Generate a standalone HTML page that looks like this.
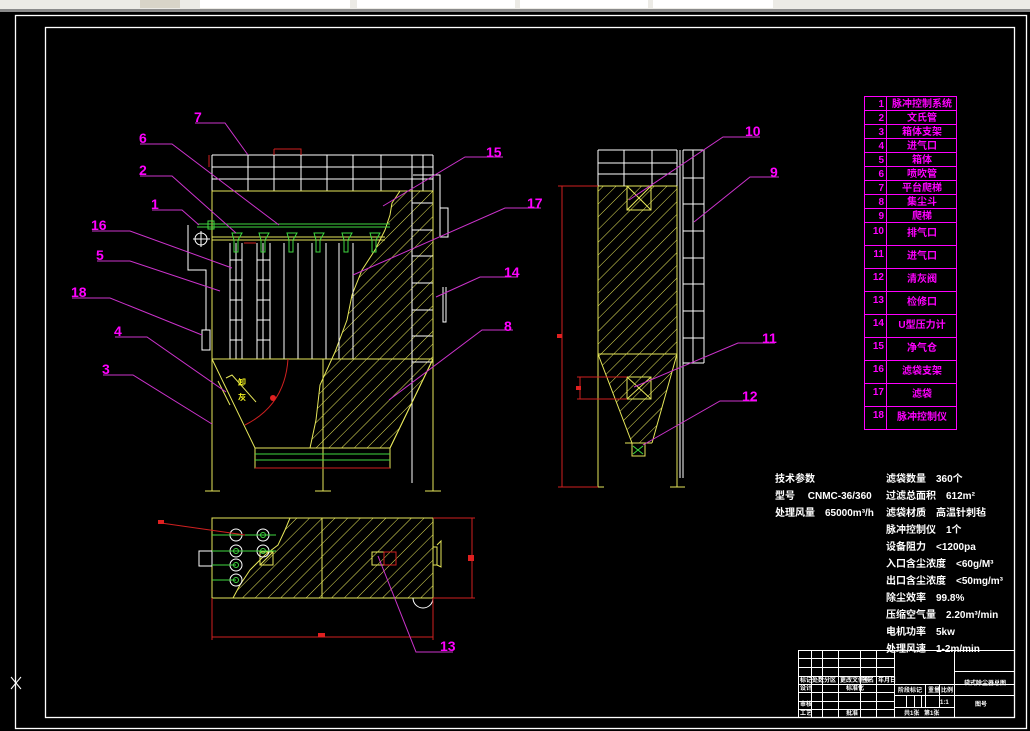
<!DOCTYPE html>
<html><head><meta charset="utf-8"><style>
html,body{margin:0;padding:0;background:#000;width:1030px;height:731px;overflow:hidden}
svg{display:block}
text{font-family:"Liberation Sans","Noto Sans CJK SC",sans-serif;font-weight:bold}
.m{fill:#ff00ff;font-size:14px}
.t{fill:#ff00ff;font-size:10px}
.p{fill:#fff;font-size:10px}
.s{fill:#fff;font-size:6px}
</style></head><body>
<svg width="1030" height="731" viewBox="0 0 1030 731" xmlns="http://www.w3.org/2000/svg">
<defs>
<pattern id="h" patternUnits="userSpaceOnUse" width="9" height="9" patternTransform="rotate(45)">
<line x1="0" y1="0" x2="0" y2="9" stroke="#e6e65a" stroke-width="1"/>
</pattern>
</defs>
<rect width="1030" height="731" fill="#000"/>
<!-- toolbar -->
<rect x="0" y="0" width="1030" height="10" fill="#ecebe6"/>
<rect x="0" y="9" width="1030" height="3" fill="#8a8a8a"/>
<rect x="200" y="0" width="150" height="8" fill="#fff"/>
<rect x="357" y="0" width="158" height="8" fill="#fff"/>
<rect x="520" y="0" width="128" height="8" fill="#fff"/>
<rect x="653" y="0" width="120" height="8" fill="#fff"/>
<rect x="140" y="0" width="40" height="8" fill="#d8d4c8"/>
<!-- frames -->
<g fill="none" stroke="#fff" stroke-width="1.3">
<rect x="15.5" y="15.5" width="1011" height="713"/>
<rect x="45.5" y="27.5" width="969" height="690"/>
</g>
<path d="M11 677 L21 689 M21 677 L11 689" stroke="#fff" stroke-width="1"/>

<!-- ===== FRONT VIEW ===== -->
<path d="M392 203 L400 191 L433 191 L433 359 L390 448 L310 448 L316 420 L320 385 L335 352 L347 320 L352 295 L362 270 L375 250 L385 230 L390 215 Z" fill="url(#h)" stroke="#e6e65a" stroke-width="1"/>
<g stroke="#fff" stroke-width="1" fill="none">
<path d="M212 155 H433 M212 167 H433 M212 179 H433"/>
<path d="M212 155 V191 M248 155 V191 M274 155 V191 M301 155 V191 M327 155 V191 M353 155 V191 M381 155 V191 M412 155 V191 M423 155 V191 M433 155 V191"/>
<path d="M412 175 V483 M413 175 H440 V237 M440 208 H448 V237 H440"/>
<path d="M412 203 H433 M412 230 H433 M412 256 H433 M412 283 H433 M412 310 H433 M412 336 H433 M412 362 H433"/>
<path d="M443 287 V322 H446 V287"/>
<path d="M188 225 V270 H206 V330 M202 330 H210 V350 H202 Z"/>
<circle cx="201" cy="239" r="6"/>
<path d="M193 239 H210 M201 231 V247"/>
<!-- bags -->
<path d="M230 243 V359 M236 243 V359 M242 243 V359 M230 260 H242 M230 280 H242 M230 300 H242 M230 320 H242 M230 340 H242"/>
<path d="M257 243 V359 M263 243 V359 M270 243 V359 M257 260 H270 M257 280 H270 M257 300 H270 M257 320 H270 M257 340 H270"/>
<path d="M284 243 V359 M298 243 V359 M312 243 V359 M326 243 V359 M339 243 V359 M353 243 V359"/>
</g>
<g stroke="#e6e65a" stroke-width="1" fill="none">
<rect x="212" y="191" width="221" height="168"/>
<path d="M212 359 V491 M323 359 V491 M433 359 V491 M205 491 H220 M315 491 H331 M425 491 H441"/>
<path d="M212 359 L255 448 M433 359 L390 448"/>
<rect x="255" y="448" width="135" height="20"/>
<path d="M212 237 H385 M212 240 H385"/>
<path d="M226 378 L232 375 L256 402 M218 381 L230 405"/>
</g>
<path d="M255 454 H390 M255 460 H390" stroke="#3fd83f"/>
<path d="M255 468 H390" stroke="#d02020"/>
<path d="M197 224 H390 M197 227 H390" stroke="#3fd83f" stroke-width="1"/>
<g stroke="#3fd83f" fill="none">
<path d="M232 233 H242 L238 240 V252 H234 V240 Z M259 233 H269 L265 240 V252 H261 V240 Z M287 233 H297 L293 240 V252 H289 V240 Z M314 233 H324 L320 240 V252 H316 V240 Z M342 233 H352 L348 240 V252 H344 V240 Z M370 233 H380 L376 240 V252 H372 V240 Z"/>
<rect x="208" y="221" width="6" height="8"/>
</g>
<path d="M288 359 Q285 405 245 425" stroke="#d02020" fill="none"/>
<circle cx="273" cy="398" r="3" fill="#e02020"/>
<path d="M209 155 V167 M274 149 H301 V155 M274 149 V155 M244 243 H256" stroke="#d02020" fill="none"/>
<text x="238" y="385" fill="#f0f020" style="font-size:8px">卸</text>
<text x="238" y="400" fill="#f0f020" style="font-size:8px">灰</text>

<!-- leaders front -->
<g stroke="#cc33cc" stroke-width="1" fill="none">
<path d="M195 123 H225 L248 155"/>
<path d="M140 144 H172 L279 225"/>
<path d="M140 176 H172 L236 233"/>
<path d="M152 210 H182 L199 225"/>
<path d="M92 231 H130 L232 268"/>
<path d="M97 261 H130 L220 291"/>
<path d="M72 298 H110 L202 335"/>
<path d="M115 337 H147 L226 392"/>
<path d="M103 375 H133 L212 424"/>
<path d="M503 157 H465 L383 206"/>
<path d="M541 208 H505 L353 275"/>
<path d="M518 277 H480 L436 297"/>
<path d="M513 330 H482 L389 400"/>
</g>
<g class="m">
<text x="194" y="122">7</text><text x="139" y="143">6</text><text x="139" y="175">2</text>
<text x="151" y="209">1</text><text x="91" y="230">16</text><text x="96" y="260">5</text>
<text x="71" y="297">18</text><text x="114" y="336">4</text><text x="102" y="374">3</text>
<text x="486" y="157">15</text><text x="527" y="208">17</text><text x="504" y="277">14</text>
<text x="504" y="331">8</text>
</g>

<!-- ===== SIDE VIEW ===== -->
<path d="M598 186 H677 V354 L652 443 H632 L598 354 Z" fill="url(#h)"/>
<g stroke="#e6e65a" fill="none">
<path d="M598 186 H677 V487 M598 186 V487 M598 354 H677 M598 354 L632 443 M677 354 L652 443 M592 487 H604 M670 487 H685"/>
<rect x="627" y="186" width="24" height="24"/><path d="M627 186 L651 210 M651 186 L627 210"/>
<rect x="627" y="377" width="24" height="22"/><path d="M627 377 L651 399 M651 377 L627 399"/>
<path d="M625 443 H652 M632 443 V456 H645 V443"/>
</g>
<path d="M633 446 L643 454 M643 446 L633 454" stroke="#3fd83f"/>
<g stroke="#fff" fill="none">
<path d="M598 150 H677 M598 163 H677 M598 174 H677 M598 150 V186 M624 150 V186 M652 150 V186 M677 150 V186"/>
<path d="M683 150 V478 M680 150 V478 M704 150 V363 M693 150 V363"/>
<path d="M683 150 H704 M683 178 H704 M683 204 H704 M683 231 H704 M683 258 H704 M683 284 H704 M683 311 H704 M683 338 H704 M683 363 H704"/>
</g>
<g stroke="#d02020" fill="none">
<path d="M562 186 V487 M558 186 H598 M558 487 H598 M580 377 V399 M577 377 H627 M577 399 H627"/>
</g>
<rect x="557" y="334" width="5" height="4" fill="#e02020"/>
<rect x="576" y="386" width="5" height="4" fill="#e02020"/>
<g stroke="#cc33cc" fill="none">
<path d="M760 137 H723 L629 200"/>
<path d="M779 177 H750 L694 222"/>
<path d="M775 343 H738 L634 387"/>
<path d="M757 401 H720 L643 445"/>
</g>
<g class="m">
<text x="745" y="136">10</text><text x="770" y="177">9</text>
<text x="762" y="343">11</text><text x="742" y="401">12</text>
</g>

<!-- ===== PLAN VIEW ===== -->
<path d="M233 598 L240 585 L250 570 L265 555 L278 545 L285 530 L290 518 H433 V598 Z" fill="url(#h)"/>
<g stroke="#e6e65a" fill="none">
<rect x="212" y="518" width="221" height="80"/>
<path d="M322 518 V598 M233 598 L240 585 L250 570 L265 555 L278 545 L285 530 L290 518"/>
<rect x="260" y="552" width="13" height="13"/><path d="M260 565 L273 552"/>
<rect x="372" y="552" width="12" height="13"/>
<path d="M433 547 H437 V565 H433 M437 545 L441 541 V567 L437 565"/>
</g>
<rect x="199" y="551" width="13" height="15" fill="none" stroke="#fff"/>
<g stroke="#fff" fill="none">
<circle cx="236" cy="535" r="6"/><circle cx="236" cy="551" r="6"/><circle cx="236" cy="565" r="6"/><circle cx="236" cy="580" r="6"/>
<circle cx="263" cy="535" r="6"/><circle cx="263" cy="551" r="6"/>
<path d="M413 598 A9 9 0 0 0 433 598"/>
</g>
<g stroke="#3fd83f" fill="none">
<path d="M212 535 H276 M212 551 H276 M212 565 H236 M212 580 H236"/>
<circle cx="263" cy="535" r="2.5"/><circle cx="263" cy="551" r="2.5"/><circle cx="236" cy="551" r="2.5"/><circle cx="236" cy="565" r="2.5"/><circle cx="236" cy="580" r="2.5"/>
</g>
<g stroke="#d02020" fill="none">
<path d="M161 523 L245 535 M212 598 V640 M433 598 V640 M212 637 H433 M433 518 H475 M433 598 H475 M472 518 V598"/>
<rect x="384" y="552" width="12" height="13"/>
</g>
<rect x="158" y="520" width="6" height="4" fill="#e02020"/>
<rect x="318" y="633" width="7" height="4" fill="#e02020"/>
<rect x="468" y="555" width="6" height="6" fill="#e02020"/>
<path d="M378 556 L416 652 H453" stroke="#cc33cc" fill="none"/>
<text class="m" x="440" y="651">13</text>

<!-- ===== PARTS TABLE ===== -->
<g stroke="#ff00ff" fill="none" stroke-width="1">
<rect x="864.5" y="96.5" width="92" height="333"/>
<path d="M886.5 96 V430"/>
<path d="M864 110.5 H957 M864 124.5 H957 M864 138.5 H957 M864 152.5 H957 M864 166.5 H957 M864 180.5 H957 M864 194.5 H957 M864 208.5 H957 M864 222.5 H957 M864 245.5 H957 M864 268.5 H957 M864 291.5 H957 M864 314.5 H957 M864 337.5 H957 M864 360.5 H957 M864 383.5 H957 M864 406.5 H957"/>
</g>
<g class="t" text-anchor="end">
<text x="884" y="107">1</text><text x="884" y="121">2</text><text x="884" y="135">3</text><text x="884" y="149">4</text><text x="884" y="163">5</text><text x="884" y="177">6</text><text x="884" y="191">7</text><text x="884" y="205">8</text><text x="884" y="219">9</text>
<text x="884" y="234">10</text><text x="884" y="257">11</text><text x="884" y="280">12</text><text x="884" y="303">13</text><text x="884" y="326">14</text><text x="884" y="349">15</text><text x="884" y="372">16</text><text x="884" y="395">17</text><text x="884" y="418">18</text>
</g>
<g class="t" text-anchor="middle">
<text x="922" y="107">脉冲控制系统</text><text x="922" y="121">文氏管</text><text x="922" y="135">箱体支架</text><text x="922" y="149">进气口</text><text x="922" y="163">箱体</text><text x="922" y="177">喷吹管</text><text x="922" y="191">平台爬梯</text><text x="922" y="205">集尘斗</text><text x="922" y="219">爬梯</text>
<text x="922" y="236">排气口</text><text x="922" y="259">进气口</text><text x="922" y="282">清灰阀</text><text x="922" y="305">检修口</text><text x="922" y="328">U型压力计</text><text x="922" y="351">净气仓</text><text x="922" y="374">滤袋支架</text><text x="922" y="397">滤袋</text><text x="922" y="420">脉冲控制仪</text>
</g>

<!-- ===== TECH PARAMS ===== -->
<g class="p">
<text x="775" y="482">技术参数</text>
<text x="775" y="499">型号　 CNMC-36/360</text>
<text x="775" y="516">处理风量　65000m³/h</text>
<text x="886" y="482">滤袋数量　360个</text>
<text x="886" y="499">过滤总面积　612m²</text>
<text x="886" y="516">滤袋材质　高温针刺毡</text>
<text x="886" y="533">脉冲控制仪　1个</text>
<text x="886" y="550">设备阻力　&lt;1200pa</text>
<text x="886" y="567">入口含尘浓度　&lt;60g/M³</text>
<text x="886" y="584">出口含尘浓度　&lt;50mg/m³</text>
<text x="886" y="601">除尘效率　99.8%</text>
<text x="886" y="618">压缩空气量　2.20m³/min</text>
<text x="886" y="635">电机功率　5kw</text>
<text x="886" y="652">处理风速　1-2m/min</text>
</g>

<!-- ===== TITLE BLOCK ===== -->
<g stroke="#fff" fill="none" stroke-width="1">
<path d="M798.5 650 V717 M798 650.5 H1015"/>
<path d="M798 658.5 H894 M798 667.5 H894 M798 676.5 H894 M798 684.5 H1015 M798 692.5 H894 M798 701.5 H894 M798 709.5 H894"/>
<path d="M811.5 650 V717 M822.5 650 V717 M838.5 650 V717 M860.5 650 V717 M876.5 650 V717 M894.5 650 V717 M954.5 650 V717"/>
<path d="M894 695.5 H1015 M894 707.5 H954 M954 671.5 H1015"/>
<path d="M925.5 684 V707 M939.5 684 V707 M906.5 695 V707 M914.5 695 V707 M921.5 695 V707"/>
</g>
<g class="s">
<text x="800" y="682">标记</text><text x="812" y="682">处数</text><text x="824" y="682">分区</text><text x="840" y="682">更改文件号</text><text x="862" y="682">签名</text><text x="878" y="682">年月日</text>
<text x="800" y="690">设计</text><text x="846" y="690">标准化</text>
<text x="800" y="706">审核</text><text x="800" y="715">工艺</text><text x="846" y="715">批准</text>
<text x="898" y="692">阶段标记</text><text x="928" y="692">重量</text><text x="941" y="692">比例</text>
<text x="940" y="704">1:1</text>
<text x="904" y="715">共1张</text><text x="924" y="715">第1张</text>
<text x="964" y="685">袋式除尘器总图</text>
<text x="975" y="706">图号</text>
</g>
</svg>
</body></html>
